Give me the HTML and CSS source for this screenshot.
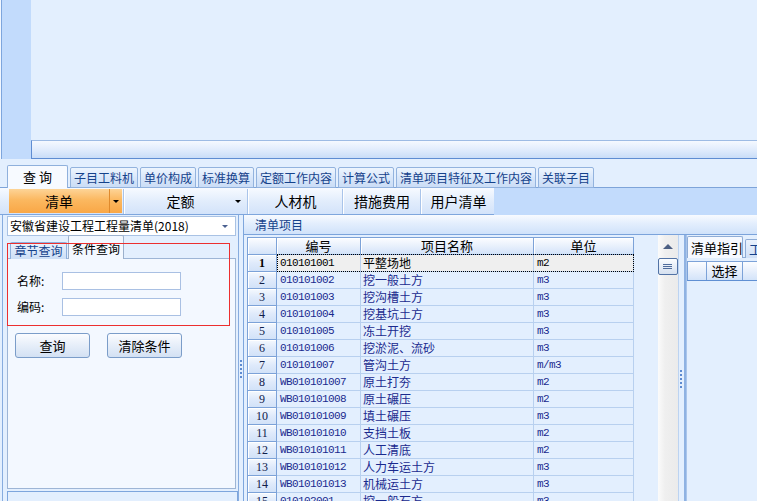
FILE: index.html
```html
<!DOCTYPE html>
<html lang="zh-CN">
<head>
<meta charset="utf-8">
<title>清单查询</title>
<link rel="stylesheet" href="styles.css">
</head>
<body>
<div class="app">
  <div class="top">
    <div class="top-strip"></div>
    <div class="top-main">
      <div class="top-fill"></div>
      <div class="top-bar"></div>
    </div>
  </div>

  <div class="tabbar">
    <div class="tab active">查 询</div>
    <div class="tab">子目工料机</div>
    <div class="tab">单价构成</div>
    <div class="tab">标准换算</div>
    <div class="tab">定额工作内容</div>
    <div class="tab">计算公式</div>
    <div class="tab">清单项目特征及工作内容</div>
    <div class="tab">关联子目</div>
  </div>

  <div class="toolbar">
    <div class="tools">
      <div class="tool tool-orange"><span class="tool-label">清单</span><span class="tool-drop"><i class="tri"></i></span></div>
      <div class="sep"></div>
      <div class="tool tool-de"><span class="tool-label">定额</span><i class="tri"></i></div>
      <div class="sep"></div>
      <div class="tool tool-rcj">人材机</div>
      <div class="sep"></div>
      <div class="tool tool-cs">措施费用</div>
      <div class="sep"></div>
      <div class="tool tool-user">用户清单</div>
    </div>
    <div class="tools-rest"></div>
  </div>

  <div class="work">
    <div class="left">
      <div class="combo"><span class="combo-text">安徽省建设工程工程量清单(2018)</span><i class="tri tri-combo"></i></div>
      <div class="ltabs">
        <div class="ltab">章节查询</div>
        <div class="ltab active">条件查询</div>
      </div>
      <div class="lpage">
        <div class="form-row"><span class="flabel">名称:</span><div class="finput"></div></div>
        <div class="form-row"><span class="flabel">编码:</span><div class="finput"></div></div>
        <div class="btns"><div class="btn">查询</div><div class="btn">清除条件</div></div>
      </div>
      <div class="lbottom"></div>
      <div class="highlight"></div>
    </div>

    <div class="splitter"><div class="grip grip-left"></div></div>

    <div class="center">
      <div class="caption">清单项目</div>
      <div class="panes">
        <div class="mid">
          <div class="grid">
            <div class="row head"><div class="c rh"></div><div class="c">编号</div><div class="c">项目名称</div><div class="c">单位</div></div>
            <div class="row sel"><div class="c rh">1</div><div class="c code">010101001</div><div class="c name">平整场地</div><div class="c code">m2</div><span class="focus"></span></div>
            <div class="row"><div class="c rh">2</div><div class="c code">010101002</div><div class="c name">挖一般土方</div><div class="c code">m3</div></div>
            <div class="row"><div class="c rh">3</div><div class="c code">010101003</div><div class="c name">挖沟槽土方</div><div class="c code">m3</div></div>
            <div class="row"><div class="c rh">4</div><div class="c code">010101004</div><div class="c name">挖基坑土方</div><div class="c code">m3</div></div>
            <div class="row"><div class="c rh">5</div><div class="c code">010101005</div><div class="c name">冻土开挖</div><div class="c code">m3</div></div>
            <div class="row"><div class="c rh">6</div><div class="c code">010101006</div><div class="c name">挖淤泥、流砂</div><div class="c code">m3</div></div>
            <div class="row"><div class="c rh">7</div><div class="c code">010101007</div><div class="c name">管沟土方</div><div class="c code">m/m3</div></div>
            <div class="row"><div class="c rh">8</div><div class="c code">WB010101007</div><div class="c name">原土打夯</div><div class="c code">m2</div></div>
            <div class="row"><div class="c rh">9</div><div class="c code">WB010101008</div><div class="c name">原土碾压</div><div class="c code">m2</div></div>
            <div class="row"><div class="c rh">10</div><div class="c code">WB010101009</div><div class="c name">填土碾压</div><div class="c code">m3</div></div>
            <div class="row"><div class="c rh">11</div><div class="c code">WB010101010</div><div class="c name">支挡土板</div><div class="c code">m2</div></div>
            <div class="row"><div class="c rh">12</div><div class="c code">WB010101011</div><div class="c name">人工清底</div><div class="c code">m2</div></div>
            <div class="row"><div class="c rh">13</div><div class="c code">WB010101012</div><div class="c name">人力车运土方</div><div class="c code">m3</div></div>
            <div class="row"><div class="c rh">14</div><div class="c code">WB010101013</div><div class="c name">机械运土方</div><div class="c code">m3</div></div>
            <div class="row"><div class="c rh">15</div><div class="c code">010102001</div><div class="c name">挖一般石方</div><div class="c code">m3</div></div>
          </div>
          <div class="vscroll">
            <i class="up"></i>
            <div class="thumb"><i></i></div>
          </div>
        </div>

        <div class="splitter2"><div class="grip grip-right"></div></div>

        <div class="right">
          <div class="rtabs">
            <div class="rtab active">清单指引</div>
            <div class="rtab">工作内容</div>
          </div>
          <div class="rpage">
            <div class="rhead"><div class="rc rc1"></div><div class="rc rc2">选择</div><div class="rc rc3"></div></div>
          </div>
        </div>
      </div>
    </div>
  </div>
</div>
</body>
</html>
```

FILE: styles.css
```css
* { box-sizing: border-box; margin: 0; padding: 0; }
html, body { width: 757px; height: 501px; overflow: hidden; }
body {
  font-family: "Noto Sans CJK SC", "Noto Sans", sans-serif;
  font-size: 12px;
  color: #000;
  background: #e3effe;
}
.app { width: 757px; height: 501px; display: flex; flex-direction: column; overflow: hidden; }

/* top area */
.top { height: 159px; flex: none; display: flex; }
.top-strip { width: 31px; background: #c2dbfc; border-left: 1px solid #f2f7ff; box-shadow: inset 1px 0 0 #7ea6dd; }
.top-main { flex: 1; display: flex; flex-direction: column; }
.top-fill { height: 140px; background: #e3effe; }
.top-bar {
  height: 19px;
  border: 1px solid #5f8dd2;
  border-right: none;
  border-top-color: #9dbbe4;
  background: linear-gradient(#f5f9ff, #dfebfc 55%, #c9ddf8);
}

/* main tab strip */
.tabbar {
  height: 29px; flex: none; display: flex; align-items: flex-end; gap: 2px;
  padding-left: 7px; background: #e3effe; box-shadow: inset 0 -1px 0 #7ea4d9;
}
.tab {
  height: 21px; line-height: 19px; padding: 0 3px; white-space: nowrap;
  border: 1px solid #93b3de; border-radius: 2px 2px 0 0;
  background: linear-gradient(#eef5fe, #d9e7fa 50%, #cbddf6);
  color: #15428b;
}
.tab.active {
  width: 61px; height: 23px; line-height: 21px; text-align: center;
  background: #f7faff; color: #000; border-color: #8fb0dc; border-bottom: none;
  font-size: 13px;
}

/* toolbar */
.toolbar { height: 27px; flex: none; display: flex; }
.tools {
  width: 494px; display: flex; padding-left: 9px; padding-top: 1px;
  background: linear-gradient(#f7faff, #e2edfc 50%, #d3e3fa);
  border-bottom: 1px solid #7ea6dd;
}
.tools-rest { flex: 1; background: #c2dbfc; }
.tool { font-size: 14px; line-height: 24px; height: 24px; text-align: center; display: flex; align-items: center; justify-content: center; }
.tool-orange { width: 113px; }
.tool-orange .tool-label {
  width: 101px; height: 24px;
  background: linear-gradient(#fdd497, #fbb860 45%, #f9a746);
  border-right: 1px solid #e08a2c;
}
.tool-orange .tool-drop {
  width: 12px; height: 24px; display: flex; align-items: center; justify-content: center;
  background: linear-gradient(#fdd497, #fbb860 45%, #f9a746);
}
.tool-de { width: 120px; }
.tool-de .tool-label { flex: 1; }
.tool-de .tri { margin-right: 5px; }
.tool-rcj { width: 91px; }
.tool-cs { width: 74px; }
.tool-user { width: 71px; }
.sep {
  width: 4px;
  background: linear-gradient(to right, transparent 1px, #a9c4ea 1px, #a9c4ea 2px, #ffffff 2px, #ffffff 3px, transparent 3px);
}
.tri {
  display: block; width: 0; height: 0;
  border-left: 3px solid transparent; border-right: 3px solid transparent; border-top: 3px solid #000;
}

/* work area */
.work { flex: 1; display: flex; min-height: 0; }

.left {
  position: relative; width: 237px; margin-left: 2px; flex: none;
  border-left: 1px solid #87acdf; border-right: 1px solid #87acdf;
  padding: 1px 2px 0 4px; display: flex; flex-direction: column;
}
.combo {
  height: 20px; flex: none; background: #fff; border: 1px solid #a9c2e4;
  display: flex; align-items: center; padding-left: 2px; line-height: 18px;
}
.combo-text { flex: 1; }
.tri-combo { margin-right: 7px; border-top-color: #4a6090; }
.ltabs { height: 23px; flex: none; display: flex; align-items: flex-end; padding-left: 3px; gap: 1px; position: relative; z-index: 1; margin-bottom: -1px; }
.ltab {
  width: 57px; height: 17px; line-height: 15px; text-align: center;
  border: 1px solid #8eb0dc; border-bottom: none; border-radius: 2px 2px 0 0;
  background: linear-gradient(#e9f1fc, #cddff6); color: #15428b;
}
.ltab.active {
  width: 56px; height: 24px; padding-top: 6px; line-height: 14px;
  background: #f3f8ff; color: #000; border-color: #9bb0cc;
}
.lpage {
  height: 231px; flex: none; background: #f3f8ff; border: 1px solid #9db5d6;
  padding-top: 13px;
}
.form-row { display: flex; align-items: center; margin-left: 9px; margin-bottom: 8px; height: 18px; }
.flabel { width: 45px; line-height: 18px; }
.finput { width: 119px; height: 18px; background: #fff; border: 1px solid #a9c0e3; }
.btns { display: flex; gap: 17px; margin-left: 7px; margin-top: 17px; }
.btn {
  width: 75px; height: 25px; line-height: 23px; text-align: center; font-size: 13px;
  border: 1px solid #7b9dc9; border-radius: 3px;
  background: linear-gradient(#fbfcff, #e6eef9 50%, #d3e1f3);
}
.lbottom { flex: 1; margin-top: 2px; width: 231px; border: 1px solid #7ea6dd; border-bottom: none; background: #e3effe; }
.highlight {
  position: absolute; z-index: 5; left: 4px; top: 28px; width: 223px; height: 83px;
  border: 1px solid #ec2f2f; pointer-events: none;
}

.splitter { width: 4px; flex: none; }
.grip {
  width: 2px; height: 19px;
  background: repeating-linear-gradient(to bottom, #5d8ad0 0 2px, transparent 2px 4px);
}
.grip-left { margin-left: 1px; margin-top: 145px; }

.center { flex: 1; display: flex; flex-direction: column; border-left: 1px solid #7ea6dd; min-width: 0; }
.caption {
  height: 20px; flex: none; padding-left: 11px; line-height: 19px; color: #15428b;
  border-bottom: 1px solid #7ba3db;
  background: linear-gradient(#f8fbff, #e3eefd 45%, #d0e2fa);
}
.panes { flex: 1; display: flex; min-height: 0; overflow: hidden; }

.mid { width: 434px; flex: none; display: flex; padding-left: 3px; overflow: hidden; }
.grid {
  width: 387px; flex: none; align-self: flex-start; margin-top: 2px;
  border-left: 1px solid #7ca2d8; border-top: 1px solid #7ca2d8;
}
.row { display: grid; grid-template-columns: 29px 84px 173px 100px; height: 17px; position: relative; }
.c {
  border-right: 1px solid #b8d0ef; border-bottom: 1px solid #b8d0ef;
  line-height: 16px; white-space: nowrap; overflow: hidden; padding-left: 2px;
  color: #1a2a8e;
}
.c.code { font-family: "Liberation Mono", "DejaVu Sans Mono", monospace; font-size: 11px; letter-spacing: -0.6px; padding-left: 3px; }
.c.rh {
  padding-left: 0; text-align: center; color: #10204a;
  font-family: "Liberation Serif", serif; font-size: 12px;
  border-right-color: #7ca2d8; border-bottom-color: #7ca2d8;
  background: linear-gradient(#f5f9fe, #dfeafb 50%, #d2e2f8);
  box-shadow: inset 1px 1px 0 #ffffff;
}
.row.head .c {
  text-align: center; padding-left: 0; color: #000; font-size: 13px; line-height: 16px;
  overflow: visible;
  border-right-color: #7ca2d8; border-bottom-color: #7ca2d8;
  background: linear-gradient(#fcfdff, #e8f0fc 50%, #d3e3f9);
  box-shadow: inset 1px 1px 0 #ffffff;
}
.row.sel .c { background: #efefef; color: #000; }
.row.sel .c.rh { background: linear-gradient(#f5f9fe, #dfeafb 50%, #d2e2f8); font-weight: bold; color: #000; }
.focus { position: absolute; left: 29px; right: 0; top: -1px; bottom: 0; border: 1px dotted #000; pointer-events: none; }

.vscroll {
  width: 20px; margin-left: auto; display: flex; flex-direction: column; align-items: center;
  background: linear-gradient(to right, #fbfbfb, #efefef 35%, #ebebeb);
}
.up {
  display: block; margin-top: 9px; width: 0; height: 0;
  border-left: 5px solid transparent; border-right: 5px solid transparent; border-bottom: 5px solid #4c5f83;
}
.thumb {
  margin-top: 9px; width: 20px; height: 17px; margin-left: -1px;
  border: 1px solid #5273a6; border-radius: 2px;
  background: linear-gradient(#fbfdff, #e6edf7 50%, #d6e1f0);
  display: flex; align-items: center; justify-content: center;
}
.thumb i {
  display: block; width: 9px; height: 5px;
  background: repeating-linear-gradient(to bottom, #4f6c9c 0 1px, transparent 1px 2px);
}

.splitter2 { width: 8px; flex: none; border-left: 1px solid #bcd3f1; border-right: 2px solid #8fb2e2; }
.grip-right { margin-left: 1px; margin-top: 135px; }

.right { flex: 1; min-width: 0; border-left: 1px solid #a9c5eb; padding-top: 2px; display: flex; flex-direction: column; overflow: hidden; }
.rtabs { height: 21px; flex: none; display: flex; align-items: flex-end; gap: 2px; margin-bottom: -1px; position: relative; z-index: 1; }
.rtab {
  flex: none; width: 40px; height: 19px; line-height: 17px; padding-left: 3px; white-space: nowrap; overflow: hidden;
  border: 1px solid #8eacd6; border-bottom: none; border-radius: 2px 2px 0 0;
  background: linear-gradient(#eaf2fd, #cfe0f7); color: #15428b; font-size: 13px;
}
.rtab.active { width: 56px; height: 22px; line-height: 21px; padding-left: 3px; background: #f6f9ff; color: #000; }
.rpage { flex: 1; border-top: 1px solid #8eacd6; padding-top: 3px; background: #e3effe; }
.rhead { display: flex; height: 20px; border-top: 1px solid #7ca2d8; border-bottom: 1px solid #5f8fd3; }
.rc {
  flex: none; height: 18px; line-height: 18px; text-align: center; font-size: 13px;
  border-left: 1px solid #7ca2d8;
  background: linear-gradient(#fcfdff, #e8f0fc 50%, #d3e3f9);
}
.rc1 { width: 19px; }
.rc2 { width: 36px; }
.rc3 { width: 30px; }
```
